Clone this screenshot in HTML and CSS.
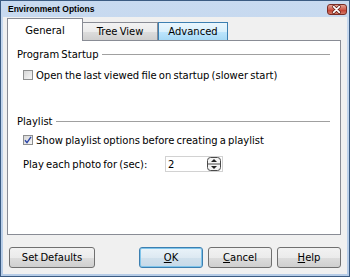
FILE: index.html
```html
<!DOCTYPE html>
<html lang="en">
<head>
    <meta charset="UTF-8">
    <title>Environment Options</title>
    <link rel="stylesheet" href="styles.css">
</head>
<body>
    <div class="window">
        <div class="titlebar">
            <span class="title">Environment Options</span>
            <span class="close">
                <svg width="20" height="11" viewBox="0 0 20 11">
                    <path d="M7 2.5 L13 8.5 M13 2.5 L7 8.5" stroke="#5a1a14" stroke-width="3.2" stroke-linecap="round"/>
                    <path d="M7 2.5 L13 8.5 M13 2.5 L7 8.5" stroke="#fff" stroke-width="1.8" stroke-linecap="round"/>
                </svg>
            </span>
        </div>

        <div class="client">
            <!-- вкладки -->
            <div class="tabs">
                <div class="tab active">General</div>
                <div class="tab">Tree View</div>
                <div class="tab hover">Advanced</div>
            </div>

            <div class="panel">
                <div class="group-title first">Program Startup</div>
                <div class="row check-row">
                    <span class="box"></span>
                    <span>Open the last viewed file on startup (slower start)</span>
                </div>

                <div class="group-title second">Playlist</div>
                <div class="row check-row tight">
                    <span class="box">
                        <svg width="8" height="8" viewBox="0 0 8 8">
                            <path d="M1 4.2 L3 6.6 L7 0.8" fill="none" stroke="#2a45a8" stroke-width="1.4"/>
                        </svg>
                    </span>
                    <span>Show playlist options before creating a playlist</span>
                </div>
                <div class="row spin-row">
                    <span class="spin-label">Play each photo for (sec):</span>
                    <div class="spin">
                        <span class="spin-value">2</span>
                        <svg class="spin-btn" width="14" height="14" viewBox="0 0 14 14">
                            <rect x="0.5" y="0.5" width="13" height="13" rx="3" fill="#f4f4f4" stroke="#4a4a4a"/>
                            <line x1="1" y1="7" x2="13" y2="7" stroke="#4a4a4a"/>
                            <path d="M4 5 L7 2 L10 5 Z" fill="#222"/>
                            <path d="M4 9 L7 12 L10 9 Z" fill="#222"/>
                        </svg>
                    </div>
                </div>
            </div>

            <div class="buttons">
                <button class="btn defaults">Set Defaults</button>
                <span class="spacer"></span>
                <button class="btn default"><u>O</u>K</button>
                <button class="btn"><u>C</u>ancel</button>
                <button class="btn"><u>H</u>elp</button>
            </div>
        </div>
    </div>
</body>
</html>
```

FILE: styles.css
```css
/* окно диалога */
body {
    margin: 0;
    font-family: "DejaVu Sans", sans-serif;
    font-size: 10px;
    word-spacing: -1px;
    color: #000;
}

.window {
    width: 350px;
    height: 277px;
    box-sizing: border-box;
    border: 1px solid #3b5b82;
    padding: 0 2px 2px;
    background: linear-gradient(#c8daf0, #b6cce7);
    display: flex;
    flex-direction: column;
}

.titlebar {
    height: 16px;
    display: flex;
    align-items: flex-start;
}

.title {
    font-family: "Liberation Sans", Arial, sans-serif;
    font-size: 8.5px;
    font-weight: bold;
    word-spacing: 0;
    padding-left: 5px;
    line-height: 17px;
    flex: 1;
}

.close {
    width: 20px;
    height: 11px;
    margin-top: 3px;
    border: 1px solid #7a2c24;
    border-radius: 3px;
    box-sizing: border-box;
    background: linear-gradient(#e4a496, #cf5b4c 50%, #c0392b 51%, #d47a68);
    display: flex;
}

.close svg {
    margin: -1px 0 0 -1px;
}

.client {
    flex: 1;
    background: #f0f0f0;
    padding: 1px 6px 6px 4px;
    display: flex;
    flex-direction: column;
}

/* вкладки */
.tabs {
    display: flex;
    align-items: flex-end;
    height: 23px;
    margin-bottom: -1px;
    position: relative;
    z-index: 1;
}

.tab {
    height: 18px;
    line-height: 17px;
    box-sizing: border-box;
    margin-bottom: 1px;
    border: 1px solid #898c95;
    border-bottom: none;
    text-align: center;
    background: linear-gradient(#f3f3f3, #ebebeb 50%, #dddddd 51%, #cfcfcf);
}

.tab.active {
    width: 76px;
    height: 23px;
    line-height: 24px;
    margin-bottom: 0;
    background: #fff;
}

.tab:nth-child(2) {
    width: 75px;
    border-left: none;
}

.tab.hover {
    width: 70px;
    border-color: #3c7fb1;
    background: linear-gradient(#eaf6fd, #d9f0fc 50%, #bee6fd 51%, #a7d9f5);
}

.panel {
    flex: 1;
    background: #fff;
    border: 1px solid #898c95;
    padding: 0 10px 0 9px;
}

.group-title {
    display: flex;
    align-items: center;
    height: 12px;
}

.group-title::after {
    content: "";
    flex: 1;
    height: 1px;
    background: #a0a0a0;
    margin-left: 3px;
}

.group-title.first {
    margin-top: 7px;
}

.group-title.second {
    margin-top: 32px;
}

.row {
    display: flex;
    align-items: center;
    height: 16px;
    padding-left: 6px;
}

.check-row {
    margin-top: 7px;
}

.check-row.tight {
    margin-top: 5px;
}

.box {
    width: 10px;
    height: 10px;
    box-sizing: border-box;
    border: 1px solid #8e8f8f;
    background: linear-gradient(135deg, #d6d6d6, #f6f6f6);
    margin-right: 3px;
    display: flex;
    align-items: center;
    justify-content: center;
}

.spin-row {
    margin-top: 8px;
}

.spin-label {
    width: 142px;
}

.spin {
    width: 58px;
    height: 16px;
    box-sizing: border-box;
    border: 1px solid #d2d2d2;
    display: flex;
    align-items: center;
    padding-left: 2px;
}

.spin-value {
    flex: 1;
}

.spin-btn {
    margin-right: 1px;
}

/* кнопки внизу */
.buttons {
    display: flex;
    gap: 5px;
    margin-top: 12px;
    height: 21px;
}

.btn {
    width: 64px;
    height: 21px;
    padding: 0;
    font-family: "DejaVu Sans", sans-serif;
    font-size: 10px;
    word-spacing: -1px;
    color: #000;
    border: 1px solid #707070;
    border-radius: 3px;
    background: linear-gradient(#f2f2f2, #ebebeb 50%, #dddddd 51%, #cfcfcf);
}

.btn.defaults {
    width: 86px;
    margin-left: 2px;
}

.btn.default {
    border-color: #3c7fb1;
    box-shadow: inset 0 0 0 1px #7fc4ea;
    background: linear-gradient(#eaf3f9, #dde9f2 50%, #d0e0ec 51%, #c6d9e8);
}

.spacer {
    flex: 1;
}
```
